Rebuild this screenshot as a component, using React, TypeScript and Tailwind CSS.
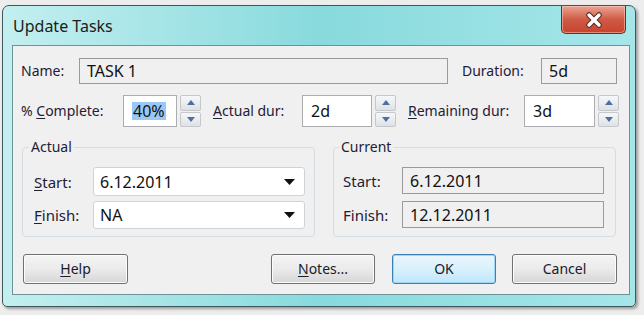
import React from "react";

const font = "font-['Noto_Sans',_'Open_Sans',_sans-serif]";

function U({ children }: { children: React.ReactNode }) {
  return <span className="underline underline-offset-2 decoration-1">{children}</span>;
}

function Spinner() {
  return (
    <div className="ml-[3px] flex h-[32px] w-[21px] flex-col gap-[1px]">
      <div className="flex flex-1 items-center justify-center rounded-[2px] border border-[#c4c8cc] bg-gradient-to-b from-[#f6f7f8] to-[#dfe2e5]">
        <svg width="8" height="5" viewBox="0 0 8 5">
          <path d="M0 5 L4 0 L8 5 Z" fill="#4e6fa3" />
        </svg>
      </div>
      <div className="flex flex-1 items-center justify-center rounded-[2px] border border-[#c4c8cc] bg-gradient-to-b from-[#f6f7f8] to-[#dfe2e5]">
        <svg width="8" height="5" viewBox="0 0 8 5">
          <path d="M0 0 L4 5 L8 0 Z" fill="#4e6fa3" />
        </svg>
      </div>
    </div>
  );
}

function SpinInput({ value, w, selected }: { value: string; w: string; selected?: boolean }) {
  return (
    <div className={`flex h-[32px] items-center border border-[#abadb3] bg-white pl-[8px] text-[16px] ${w}`}>
      <span className={selected ? "bg-[#99c8f6] px-[1px] text-[#111]" : "text-[#111]"}>{value}</span>
    </div>
  );
}

function Combo({ value, h }: { value: string; h: string }) {
  return (
    <div className={`relative flex w-[212px] items-center rounded-[3px] border border-[#d0d3d6] bg-white pl-[6px] text-[16px] text-[#111] ${h}`}>
      {value}
      <svg className="absolute right-[9px] top-1/2 -translate-y-1/2" width="11" height="6" viewBox="0 0 11 6">
        <path d="M0 0 L11 0 L5.5 6 Z" fill="#111" />
      </svg>
    </div>
  );
}

function ReadOnly({ value, w, h }: { value: string; w: string; h: string }) {
  return (
    <div className={`flex items-center border border-[#9a9a9a] bg-[#f0f0f0] pl-[7px] text-[16px] text-[#111] ${w} ${h}`}>
      {value}
    </div>
  );
}

function Btn({ children, w, def }: { children: React.ReactNode; w: string; def?: boolean }) {
  return (
    <div
      className={`flex h-[30px] items-center justify-center rounded-[3px] border ${w} ${
        def
          ? "border-[#3c7fb1] bg-gradient-to-b from-[#eaf6fd] via-[#d9f0fc] to-[#bee6fd] shadow-[inset_0_0_0_1px_#9fd7f7]"
          : "border-[#707070] bg-gradient-to-b from-[#f4f4f4] via-[#ebebeb] to-[#d6d6d6] shadow-[inset_0_0_0_1px_#fcfcfc]"
      } text-[#1a1a2a]`}
    >
      {children}
    </div>
  );
}

export default function App() {
  return (
    <div className={`h-[315px] w-[644px] overflow-hidden bg-[#ededed] ${font} text-[14px] leading-[18px]`}>
      <div className="ml-[2px] mt-[5px] flex h-[302px] w-[634px] flex-col rounded-t-[7px] rounded-b-[5px] border border-[#40575c] bg-gradient-to-r from-[#c3eff0] via-[#88dadd] to-[#a5e6e9] shadow-[2px_2px_3px_rgba(0,0,0,0.35)]">
        {/* title bar */}
        <div className="relative h-[39px] shrink-0">
          <div className="pl-[10px] pt-[10px] text-[16px] leading-[20px] text-[#1b1b1b]">Update Tasks</div>
          <div className="absolute right-[9px] top-0 flex h-[28px] w-[65px] items-center justify-center rounded-b-[5px] border border-t-0 border-[#6e2b22] bg-gradient-to-b from-[#e9a595] via-[#cf5a44] to-[#c8432e] shadow-[inset_0_0_0_1px_rgba(255,210,200,0.5)]">
            <svg width="20" height="16" viewBox="0 0 20 16">
              <path d="M5 3 L15 13 M15 3 L5 13" stroke="#5a2a25" strokeWidth="5.5" strokeLinecap="round" />
              <path d="M5 3 L15 13 M15 3 L5 13" stroke="#ffffff" strokeWidth="3.5" strokeLinecap="round" />
            </svg>
          </div>
        </div>

        {/* client area */}
        <div className="mb-[11px] ml-[9px] mr-[5px] flex-1 border border-[#6f9296] bg-[#f0f0f0] text-[#1e2036]">
          {/* row 1 */}
          <div className="ml-[8px] mt-[12px] flex items-center">
            <div className="w-[58px]">Name:</div>
            <ReadOnly value="TASK 1" w="w-[369px]" h="h-[26px]" />
            <div className="ml-[14px] w-[79px]">Duration:</div>
            <ReadOnly value="5d" w="w-[76px]" h="h-[26px]" />
          </div>

          {/* row 2 */}
          <div className="ml-[8px] mt-[11px] flex items-center">
            <div className="w-[102px]">
              % <U>C</U>omplete:
            </div>
            <SpinInput value="40%" w="w-[54px]" selected />
            <Spinner />
            <div className="ml-[12px] w-[89px]">
              <U>A</U>ctual dur:
            </div>
            <SpinInput value="2d" w="w-[70px]" />
            <Spinner />
            <div className="ml-[12px] w-[116px]">
              <U>R</U>emaining dur:
            </div>
            <SpinInput value="3d" w="w-[71px]" />
            <Spinner />
          </div>

          {/* groups */}
          <div className="ml-[9px] mt-[20px] flex gap-[18px]">
            <div className="relative h-[90px] w-[293px] rounded-[4px] border border-[#d5dde2] pl-[11px] pt-[19px]">
              <span className="absolute -top-[10px] left-[6px] bg-[#f0f0f0] px-[2px]">Actual</span>
              <div className="flex items-center">
                <div className="w-[59px] text-[15px]">
                  <U>S</U>tart:
                </div>
                <Combo value="6.12.2011" h="h-[29px]" />
              </div>
              <div className="mt-[5px] flex items-center">
                <div className="w-[59px] text-[15px]">
                  <U>F</U>inish:
                </div>
                <Combo value="NA" h="h-[28px]" />
              </div>
            </div>

            <div className="relative h-[90px] w-[283px] rounded-[4px] border border-[#d5dde2] pl-[9px] pt-[19px]">
              <span className="absolute -top-[10px] left-[5px] bg-[#f0f0f0] px-[2px]">Current</span>
              <div className="flex items-center">
                <div className="w-[59px] text-[15px]">Start:</div>
                <ReadOnly value="6.12.2011" w="w-[202px]" h="h-[27px]" />
              </div>
              <div className="mt-[7px] flex items-center">
                <div className="w-[59px] text-[15px]">Finish:</div>
                <ReadOnly value="12.12.2011" w="w-[202px]" h="h-[27px]" />
              </div>
            </div>
          </div>

          {/* buttons */}
          <div className="ml-[10px] mt-[17px] flex items-center">
            <Btn w="w-[105px]">
              <U>H</U>elp
            </Btn>
            <div className="ml-[143px]">
              <Btn w="w-[104px]">
                <U>N</U>otes...
              </Btn>
            </div>
            <div className="ml-[17px]">
              <Btn w="w-[104px]" def>
                OK
              </Btn>
            </div>
            <div className="ml-[16px]">
              <Btn w="w-[105px]">Cancel</Btn>
            </div>
          </div>
        </div>
      </div>
    </div>
  );
}
